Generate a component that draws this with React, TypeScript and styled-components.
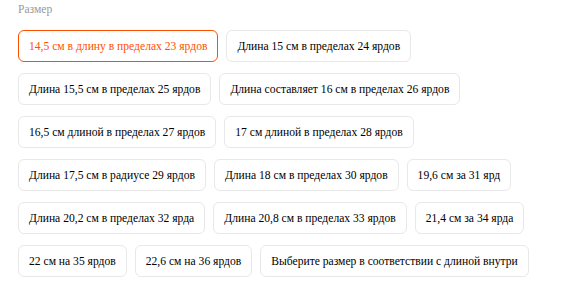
import React from "react";
import styled, { createGlobalStyle } from "styled-components";

const Global = createGlobalStyle`
  html, body { margin: 0; padding: 0; background: #fff; }
  body { font-family: "Liberation Serif", "Times New Roman", Times, serif; }
`;

const Wrap = styled.div`
  padding: 0 10px 0 18px;
  width: 582px;
  box-sizing: border-box;
`;

const Label = styled.div`
  font-family: "Liberation Serif", "Times New Roman", Times, serif;
  font-size: 11.6px;
  line-height: 18px;
  color: #999;
  padding-top: 1px;
  margin-bottom: 11px;
`;

const List = styled.div`
  display: flex;
  flex-wrap: wrap;
  column-gap: 8px;
  row-gap: 11px;
`;

const Chip = styled.button<{ $active?: boolean }>`
  font-family: "Liberation Serif", "Times New Roman", Times, serif;
  font-size: 11.6px;
  line-height: 15px;
  height: 32px;
  padding: 0 10px;
  background: #fff;
  border: 1px solid ${(p) => (p.$active ? "#ff5000" : "#e8e8e8")};
  color: ${(p) => (p.$active ? "#ff5000" : "#000")};
  border-radius: 6px;
  cursor: pointer;
  white-space: nowrap;
`;

const sizes = [
  "14,5 см в длину в пределах 23 ярдов",
  "Длина 15 см в пределах 24 ярдов",
  "Длина 15,5 см в пределах 25 ярдов",
  "Длина составляет 16 см в пределах 26 ярдов",
  "16,5 см длиной в пределах 27 ярдов",
  "17 см длиной в пределах 28 ярдов",
  "Длина 17,5 см в радиусе 29 ярдов",
  "Длина 18 см в пределах 30 ярдов",
  "19,6 см за 31 ярд",
  "Длина 20,2 см в пределах 32 ярда",
  "Длина 20,8 см в пределах 33 ярдов",
  "21,4 см за 34 ярда",
  "22 см на 35 ярдов",
  "22,6 см на 36 ярдов",
  "Выберите размер в соответствии с длиной внутри",
];

export default function App() {
  return (
    <>
      <Global />
      <Wrap>
        <Label>Размер</Label>
        <List>
          {sizes.map((s, i) => (
            <Chip key={s} $active={i === 0}>
              {s}
            </Chip>
          ))}
        </List>
      </Wrap>
    </>
  );
}
